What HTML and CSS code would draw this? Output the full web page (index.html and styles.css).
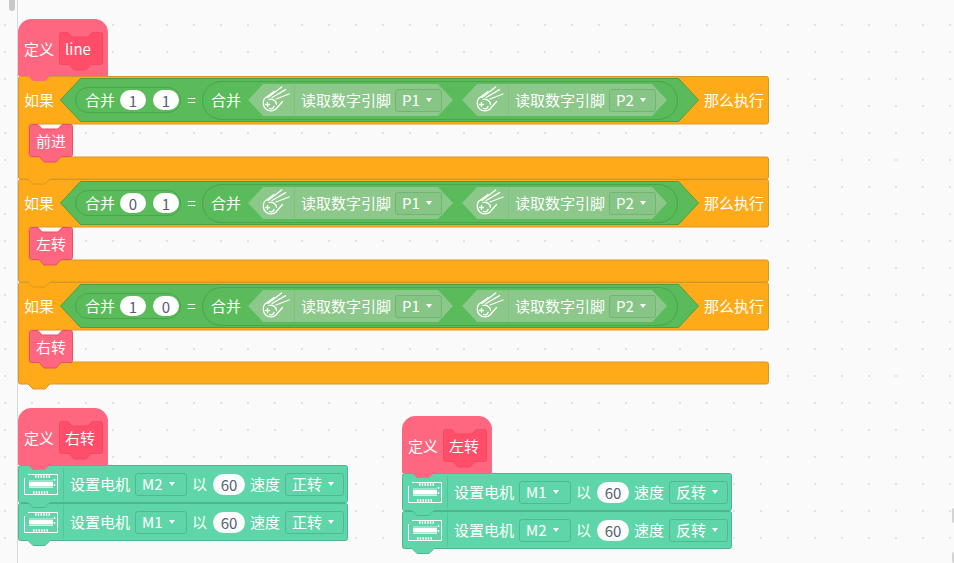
FILE: index.html
```html
<!DOCTYPE html>
<html lang="zh">
<head>
<meta charset="utf-8">
<title>积木程序</title>
<link rel="stylesheet" href="styles.css">
</head>
<body>
<svg class="defs" width="0" height="0" aria-hidden="true">
  <defs>
    <path id="p-hat" d="M13 .5H77a12.500 12.500 0 0 1 12.500 12.500V56.500H32l-5 5H15l-5-5H.5V13A12.500 12.500 0 0 1 13 .5z"/>
    <path id="p-call" d="M2.500 .5H9l4 4.500h16l4-4.500H41.500a2 2 0 0 1 2 2v28a2 2 0 0 1-2 2H32l-5 5.500H15l-5-5.500H2.500a2 2 0 0 1-2-2v-28a2 2 0 0 1 2-2z"/>
    <path id="p-if" d="M2.500 .5H748.500a2 2 0 0 1 2 2V46a2 2 0 0 1-2 2H11V81H748.500a2 2 0 0 1 2 2v18a2 2 0 0 1-2 2H32l-5 5H15l-5-5H2.500a2 2 0 0 1-2-2V2.500a2 2 0 0 1 2-2z"/>
    <path id="p-if-short" d="M2.500 .5H748.500a2 2 0 0 1 2 2V46a2 2 0 0 1-2 2H11V80H748.500a2 2 0 0 1 2 2v18a2 2 0 0 1-2 2H32l-5 5H15l-5-5H2.500a2 2 0 0 1-2-2V2.500a2 2 0 0 1 2-2z"/>
    <path id="p-motor" d="M2.500 .5H327.500a2 2 0 0 1 2 2v33a2 2 0 0 1-2 2H32l-5 5H15l-5-5H2.500a2 2 0 0 1-2-2v-33a2 2 0 0 1 2-2z"/>
    <polygon id="p-bool" points="20.500,.5 618.500,.5 638.500,22 618.500,43.500 20.500,43.500 .5,22"/>
    <g id="i-sensor" fill="none" stroke="#fff" stroke-width="1.300" stroke-linecap="round" stroke-linejoin="round">
      <path d="M2.500 12.500 12 5.500"/>
      <path d="M2.500 12.500C.5 15.500 1 20.500 3.500 22.800 6.500 25.500 11.500 25.500 14 23L20.500 15.500"/>
      <path d="M6 11.500 19.700 1"/>
      <path d="M10 11.500 23.600 3.600"/>
      <path d="M14 13 27 8"/>
      <path d="M7 13.500C10.500 12.500 14 14.500 14.500 18.500"/>
      <path d="M5.500 16.500v4M3.500 18.500h4"/>
      <path d="M7.500 22.500C9.500 23.500 11.500 22.500 12 20.500"/>
    </g>
    <g id="i-motor" fill="none" stroke="#fff" stroke-width="1">
      <path d="M4 .5H33.500V20.500H.5V4"/>
      <path d="M11 2.500h15M9 18.500h15" stroke-width="2.500" stroke-dasharray="1.500 1.200"/>
      <rect x="5.500" y="8.500" width="23" height="3.500" fill="#fff"/>
      <path d="M5 7h24M5 13.500h24" stroke-width=".7"/>
      <path d="M30.500 5v2M30.500 10v2" stroke-width="1.500"/>
    </g>
  </defs>
</svg>

<div class="app">
  <aside class="gutter"><div class="thumb"></div></aside>
  <main class="canvas">

    <div class="stack stack-main">
      <div class="block hat">
        <svg class="shape pink" width="90" height="63"><use href="#p-hat"/></svg>
        <span class="label">定义</span>
        <div class="call proto">
          <svg class="shape deep" width="44" height="39"><use href="#p-call"/></svg>
          <span class="label latin">line</span>
        </div>
      </div>

      <div class="block cond">
        <svg class="shape amber" width="751" height="109"><use href="#p-if"/></svg>
        <div class="cond-head">
          <span class="label">如果</span>
          <div class="bool">
            <svg class="shape green" width="639" height="44"><use href="#p-bool"/></svg>
            <div class="pill pill-sm">
              <span class="label">合并</span>
              <span class="num num-bit">1</span>
              <span class="num num-bit">1</span>
            </div>
            <span class="label eq">=</span>
            <div class="pill pill-lg">
              <span class="label">合并</span>
              <div class="sensor">
                <svg class="icon-sensor" width="28" height="28"><use href="#i-sensor"/></svg>
                <span class="sep sep-sensor"></span>
                <span class="label">读取数字引脚</span>
                <span class="drop drop-sensor"><span class="label latin">P1</span><i class="caret"></i></span>
              </div>
              <div class="sensor">
                <svg class="icon-sensor" width="28" height="28"><use href="#i-sensor"/></svg>
                <span class="sep sep-sensor"></span>
                <span class="label">读取数字引脚</span>
                <span class="drop drop-sensor"><span class="label latin">P2</span><i class="caret"></i></span>
              </div>
            </div>
          </div>
          <span class="label">那么执行</span>
        </div>
        <div class="mouth">
          <div class="call">
            <svg class="shape pink-line" width="44" height="39"><use href="#p-call"/></svg>
            <span class="label">前进</span>
          </div>
        </div>
        <div class="arm"></div>
      </div>

      <div class="block cond">
        <svg class="shape amber" width="751" height="109"><use href="#p-if"/></svg>
        <div class="cond-head">
          <span class="label">如果</span>
          <div class="bool">
            <svg class="shape green" width="639" height="44"><use href="#p-bool"/></svg>
            <div class="pill pill-sm">
              <span class="label">合并</span>
              <span class="num num-bit">0</span>
              <span class="num num-bit">1</span>
            </div>
            <span class="label eq">=</span>
            <div class="pill pill-lg">
              <span class="label">合并</span>
              <div class="sensor">
                <svg class="icon-sensor" width="28" height="28"><use href="#i-sensor"/></svg>
                <span class="sep sep-sensor"></span>
                <span class="label">读取数字引脚</span>
                <span class="drop drop-sensor"><span class="label latin">P1</span><i class="caret"></i></span>
              </div>
              <div class="sensor">
                <svg class="icon-sensor" width="28" height="28"><use href="#i-sensor"/></svg>
                <span class="sep sep-sensor"></span>
                <span class="label">读取数字引脚</span>
                <span class="drop drop-sensor"><span class="label latin">P2</span><i class="caret"></i></span>
              </div>
            </div>
          </div>
          <span class="label">那么执行</span>
        </div>
        <div class="mouth">
          <div class="call">
            <svg class="shape pink-line" width="44" height="39"><use href="#p-call"/></svg>
            <span class="label">左转</span>
          </div>
        </div>
        <div class="arm"></div>
      </div>

      <div class="block cond">
        <svg class="shape amber" width="751" height="108"><use href="#p-if-short"/></svg>
        <div class="cond-head">
          <span class="label">如果</span>
          <div class="bool">
            <svg class="shape green" width="639" height="44"><use href="#p-bool"/></svg>
            <div class="pill pill-sm">
              <span class="label">合并</span>
              <span class="num num-bit">1</span>
              <span class="num num-bit">0</span>
            </div>
            <span class="label eq">=</span>
            <div class="pill pill-lg">
              <span class="label">合并</span>
              <div class="sensor">
                <svg class="icon-sensor" width="28" height="28"><use href="#i-sensor"/></svg>
                <span class="sep sep-sensor"></span>
                <span class="label">读取数字引脚</span>
                <span class="drop drop-sensor"><span class="label latin">P1</span><i class="caret"></i></span>
              </div>
              <div class="sensor">
                <svg class="icon-sensor" width="28" height="28"><use href="#i-sensor"/></svg>
                <span class="sep sep-sensor"></span>
                <span class="label">读取数字引脚</span>
                <span class="drop drop-sensor"><span class="label latin">P2</span><i class="caret"></i></span>
              </div>
            </div>
          </div>
          <span class="label">那么执行</span>
        </div>
        <div class="mouth mouth-short">
          <div class="call">
            <svg class="shape pink-line" width="44" height="39"><use href="#p-call"/></svg>
            <span class="label">右转</span>
          </div>
        </div>
        <div class="arm"></div>
      </div>
    </div>

    <div class="stack stack-right">
      <div class="block hat">
        <svg class="shape pink" width="90" height="63"><use href="#p-hat"/></svg>
        <span class="label">定义</span>
        <div class="call proto">
          <svg class="shape deep" width="44" height="39"><use href="#p-call"/></svg>
          <span class="label">右转</span>
        </div>
      </div>
      <div class="block motor">
        <svg class="shape mint" width="330" height="44"><use href="#p-motor"/></svg>
        <svg class="icon-motor" width="34" height="21"><use href="#i-motor"/></svg>
        <span class="sep sep-motor"></span>
        <span class="label">设置电机</span>
        <span class="drop drop-motor drop-port"><span class="label latin">M2</span><i class="caret"></i></span>
        <span class="label">以</span>
        <span class="num num-speed">60</span>
        <span class="label">速度</span>
        <span class="drop drop-motor drop-dir"><span class="label">正转</span><i class="caret"></i></span>
      </div>
      <div class="block motor">
        <svg class="shape mint" width="330" height="44"><use href="#p-motor"/></svg>
        <svg class="icon-motor" width="34" height="21"><use href="#i-motor"/></svg>
        <span class="sep sep-motor"></span>
        <span class="label">设置电机</span>
        <span class="drop drop-motor drop-port"><span class="label latin">M1</span><i class="caret"></i></span>
        <span class="label">以</span>
        <span class="num num-speed">60</span>
        <span class="label">速度</span>
        <span class="drop drop-motor drop-dir"><span class="label">正转</span><i class="caret"></i></span>
      </div>
    </div>

    <div class="stack stack-left">
      <div class="block hat">
        <svg class="shape pink" width="90" height="63"><use href="#p-hat"/></svg>
        <span class="label">定义</span>
        <div class="call proto">
          <svg class="shape deep" width="44" height="39"><use href="#p-call"/></svg>
          <span class="label">左转</span>
        </div>
      </div>
      <div class="block motor">
        <svg class="shape mint" width="330" height="44"><use href="#p-motor"/></svg>
        <svg class="icon-motor" width="34" height="21"><use href="#i-motor"/></svg>
        <span class="sep sep-motor"></span>
        <span class="label">设置电机</span>
        <span class="drop drop-motor drop-port"><span class="label latin">M1</span><i class="caret"></i></span>
        <span class="label">以</span>
        <span class="num num-speed">60</span>
        <span class="label">速度</span>
        <span class="drop drop-motor drop-dir"><span class="label">反转</span><i class="caret"></i></span>
      </div>
      <div class="block motor">
        <svg class="shape mint" width="330" height="44"><use href="#p-motor"/></svg>
        <svg class="icon-motor" width="34" height="21"><use href="#i-motor"/></svg>
        <span class="sep sep-motor"></span>
        <span class="label">设置电机</span>
        <span class="drop drop-motor drop-port"><span class="label latin">M2</span><i class="caret"></i></span>
        <span class="label">以</span>
        <span class="num num-speed">60</span>
        <span class="label">速度</span>
        <span class="drop drop-motor drop-dir"><span class="label">反转</span><i class="caret"></i></span>
      </div>
    </div>

    <div class="edge edge-a"></div>
    <div class="edge edge-b"></div>
  </main>
</div>
</body>
</html>
```

FILE: styles.css
```css
* { box-sizing: border-box; }

html, body {
  margin: 0;
  height: 100%;
  overflow: hidden;
}

body {
  font-family: "Noto Sans CJK SC", "Noto Sans", sans-serif;
  color: #fff;
}

.defs {
  display: block;
  height: 0;
}

.app {
  display: flex;
  width: 954px;
  height: 563px;
  background-color: #fafafa;
  background-image: radial-gradient(circle at 5px 25px, #e2e2e2 0, #e2e2e2 1px, transparent 1.4px);
  background-size: 27px 27px;
  background-position: 0 0;
}

.gutter {
  flex: 0 0 18px;
  padding-left: 9px;
  border-right: 1px solid #d8d8d8;
}

.thumb {
  width: 6px;
  height: 11px;
  background: #c9c9c9;
  border-radius: 0 0 3px 3px;
}

.canvas {
  position: relative;
  flex: 1;
}

.stack {
  position: absolute;
  display: flex;
  flex-direction: column;
}

.stack-main { left: 0; top: 19px; }
.stack-right { left: 0; top: 408px; }
.stack-left { left: 384px; top: 416px; }

.block { position: relative; }
.stack > .block:nth-child(1) { z-index: 9; }
.stack > .block:nth-child(2) { z-index: 8; }
.stack > .block:nth-child(3) { z-index: 7; }
.stack > .block:nth-child(4) { z-index: 6; }

.shape {
  position: absolute;
  left: 0;
  top: 0;
  z-index: -1;
  overflow: visible;
}

.pink { fill: #ff6680; stroke: #ff6680; }
.pink-line { fill: #ff6680; stroke: #e84f6b; }
.deep { fill: #ff4d6a; stroke: #f04a67; }
.amber { fill: #ffab19; stroke: #d8962a; }
.green { fill: #59bb59; stroke: #4a9f45; }
.mint { fill: #5fd6a9; stroke: #4db58f; }

.label {
  font-size: 15px;
  line-height: 20px;
  white-space: nowrap;
  flex: none;
}

.latin { font-size: 15px; }

/* define hat */
.hat {
  display: flex;
  align-items: center;
  gap: 5px;
  width: 90px;
  height: 57px;
  padding: 13px 0 11px 6px;
}

.call {
  position: relative;
  display: flex;
  align-items: center;
  justify-content: center;
  width: 44px;
  height: 33px;
  z-index: 0;
}

.proto {
  justify-content: flex-start;
  padding-left: 6px;
  flex: none;
}

/* if block */
.cond { width: 751px; }

.cond-head {
  display: flex;
  align-items: center;
  height: 48px;
  padding-left: 6px;
}

.bool {
  position: relative;
  z-index: 0;
  display: flex;
  align-items: center;
  width: 639px;
  height: 44px;
  margin: 0 5px 0 6px;
  padding-left: 15px;
}

.pill {
  display: flex;
  align-items: center;
  border: 1px solid #4aa548;
  border-radius: 20px;
  flex: none;
}

.pill-sm {
  width: 106px;
  height: 26px;
  padding-left: 9px;
  gap: 5px;
}

.pill-sm .num + .num { margin-left: 2px; }

.eq { width: 21px; text-align: center; }

.pill-lg {
  width: 476px;
  height: 39px;
  padding-left: 8px;
  gap: 7px;
}

.pill-lg .label + .sensor { margin-left: 0; }
.sensor + .sensor { margin-left: 2px; }

.sensor {
  display: flex;
  align-items: center;
  flex: none;
  width: 205px;
  height: 32px;
  padding-left: 14px;
  background: #8bc88a;
  clip-path: polygon(15px 0, 190px 0, 205px 50%, 190px 100%, 15px 100%, 0 50%);
}

.icon-sensor { flex: none; overflow: visible; }

.sep { flex: none; width: 1px; }

.sep-sensor {
  height: 32px;
  margin: 0 6px 0 4px;
  background: #82bf81;
}

.drop {
  display: inline-flex;
  align-items: center;
  flex: none;
  height: 23px;
  border-radius: 3px;
  padding-left: 6px;
  gap: 6px;
}

.drop-sensor {
  width: 47px;
  margin-left: 4px;
  border: 1px solid #74b473;
  background: #87c586;
}

.drop-motor {
  border: 1px solid #4fb991;
  background: #5fd6a9;
}

.drop-port { width: 52px; }
.drop-dir { width: 59px; }

.caret {
  width: 0;
  height: 0;
  flex: none;
  border-left: 3.5px solid transparent;
  border-right: 3.5px solid transparent;
  border-top: 4px solid #fff;
}

.num {
  display: flex;
  align-items: center;
  justify-content: center;
  flex: none;
  background: #fff;
  color: #575e75;
  line-height: 1;
}

.num-bit {
  width: 26px;
  height: 20px;
  border-radius: 10px;
  font-size: 15px;
}

.num-speed {
  width: 32px;
  height: 21px;
  border-radius: 11px;
  font-size: 15px;
  margin-left: 1px;
}

.mouth {
  height: 33px;
  padding-left: 11px;
}

.mouth-short { height: 32px; }

.arm { height: 22px; }

/* motor block */
.motor {
  display: flex;
  align-items: center;
  gap: 5px;
  width: 330px;
  height: 38px;
  padding-left: 6px;
}

.icon-motor { flex: none; overflow: visible; }

.sep-motor {
  height: 34px;
  margin: 0 1px 0 0;
  background: #54c49b;
}

/* window edge marks */
.edge {
  position: absolute;
  right: 0;
  width: 2px;
  background: #d4d4d4;
  border-radius: 2px 0 0 2px;
}

.edge-a { top: 508px; height: 15px; }
.edge-b { top: 552px; height: 11px; }
```
